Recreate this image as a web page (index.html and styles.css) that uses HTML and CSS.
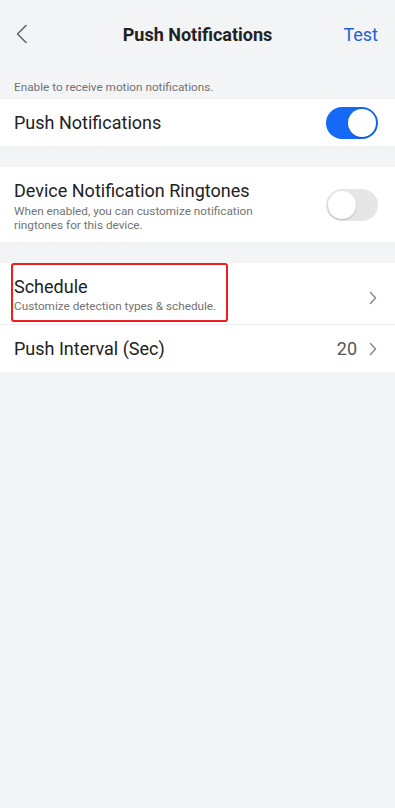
FILE: index.html
```html
<!DOCTYPE html>
<html>
<head>
<meta charset="utf-8">
<link rel="stylesheet" href="styles.css">
</head>
<body>
<div class="page">
  <header class="nav">
    <svg class="back" width="14" height="20" viewBox="0 0 14 20"><path d="M11 1.5 L2.5 10 L11 18.5" fill="none" stroke="#666" stroke-width="1.6" stroke-linecap="round" stroke-linejoin="round"/></svg>
    <div class="title">Push Notifications</div>
    <div class="action">Test</div>
  </header>
  <div class="caption">Enable to receive motion notifications.</div>
  <div class="group">
    <div class="row row-simple">
      <div class="label">Push Notifications</div>
      <div class="toggle on"><span class="knob"></span></div>
    </div>
  </div>
  <div class="group gap">
    <div class="row row-sub">
      <div class="text">
        <div class="label">Device Notification Ringtones</div>
        <div class="sub">When enabled, you can customize notification<br>ringtones for this device.</div>
      </div>
      <div class="toggle off"><span class="knob"></span></div>
    </div>
  </div>
  <div class="group gap">
    <div class="row row-sched divider">
      <div class="text">
        <div class="label">Schedule</div>
        <div class="sub">Customize detection types &amp; schedule.</div>
      </div>
      <svg class="chev" width="8" height="14" viewBox="0 0 8 14"><path d="M1.5 1.5 L6.5 7 L1.5 12.5" fill="none" stroke="#8a8a96" stroke-width="1.5" stroke-linecap="round" stroke-linejoin="round"/></svg>
      <div class="highlight"></div>
    </div>
    <div class="row row-simple">
      <div class="label">Push Interval (Sec)</div>
      <div class="value">20</div>
      <svg class="chev" width="8" height="14" viewBox="0 0 8 14"><path d="M1.5 1.5 L6.5 7 L1.5 12.5" fill="none" stroke="#8a8a96" stroke-width="1.5" stroke-linecap="round" stroke-linejoin="round"/></svg>
    </div>
  </div>
</div>
</body>
</html>
```

FILE: styles.css
```css
* { box-sizing: border-box; }
html, body { margin: 0; padding: 0; }
body {
  background: #f3f4f6;
  font-family: Roboto, "Liberation Sans", sans-serif;
  color: #222;
  width: 395px;
  min-height: 808px;
}
.page { display: flex; flex-direction: column; }
.nav {
  height: 68px;
  display: flex;
  align-items: center;
  padding: 0 17px 0 15px;
  position: relative;
}
.back { display: block; }
.title {
  position: absolute;
  left: 0; right: 0;
  text-align: center;
  font-size: 18px;
  font-weight: 700;
  color: #222;
  pointer-events: none;
}
.action {
  margin-left: auto;
  font-size: 18px;
  color: #1a5fd6;
}
.caption {
  font-size: 11.75px;
  color: #737373;
  padding: 11px 14px 4px;
  line-height: 16px;
}
.group { background: #fff; }
.gap { margin-top: 21px; }
.row {
  display: flex;
  align-items: center;
  padding: 0 17px 0 14px;
  position: relative;
}
.row-simple { height: 47px; }
.row-sub { height: 75px; align-items: flex-start; padding-top: 13px; }
.row-sub .toggle { margin-top: 9px; }
.row-sched { height: 62px; align-items: flex-start; padding-top: 13px; }
.row-sched .chev { margin-top: 15px; }
.divider::after {
  content: "";
  position: absolute;
  left: 0; right: 0; bottom: 0;
  height: 1px;
  background: #ececee;
}
.text { flex: 1; display: flex; flex-direction: column; }
.label { font-size: 18px; color: #222; line-height: 22px; flex: 1; }
.text .label { flex: none; }
.sub { font-size: 11.75px; color: #737373; line-height: 14px; margin-top: 2px; }
.row-sched .sub { margin-top: 1px; }
.value { font-size: 18px; color: #555; margin-right: 12px; }
.chev { display: block; margin-right: 1px; }
.toggle {
  width: 52px; height: 32px;
  border-radius: 16px;
  position: relative;
  flex: none;
}
.toggle.on { background: #1668f6; }
.toggle.off { background: #e6e6e6; }
.knob {
  position: absolute;
  top: 2px;
  width: 28px; height: 28px;
  border-radius: 50%;
  background: #fff;
  box-shadow: 0 1px 2px rgba(0,0,0,0.2);
}
.on .knob { right: 2px; }
.off .knob { left: 2px; }
.highlight {
  position: absolute;
  left: 11px; top: 0;
  width: 217px; height: 59px;
  border: 2px solid #f21c1c;
  border-radius: 3px;
  pointer-events: none;
}
```
